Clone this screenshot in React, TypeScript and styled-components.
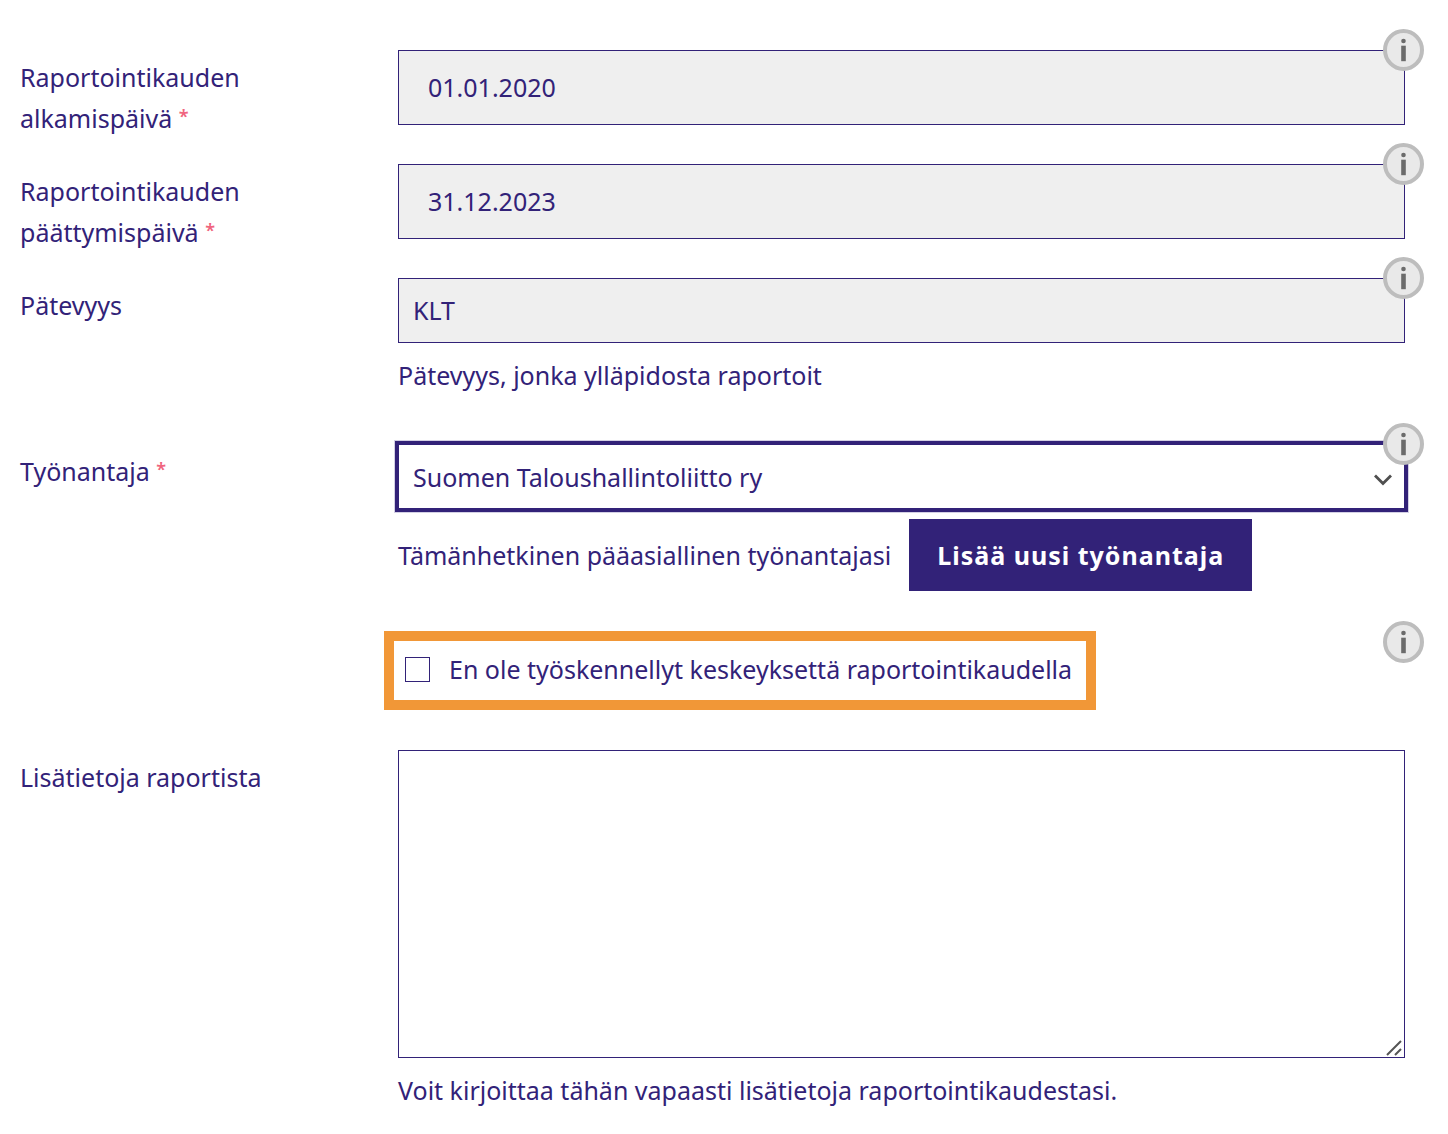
import React, { ReactNode } from 'react';
import styled, { createGlobalStyle } from 'styled-components';

const ink = '#322278';

const GlobalStyle = createGlobalStyle`
  *, *::before, *::after { box-sizing: border-box; }
  body {
    margin: 0;
    background: #fff;
    color: ${ink};
    font-family: "Noto Sans", "Open Sans", sans-serif;
    font-size: 25px;
    line-height: 41px;
  }
  input, select, textarea, button { font: inherit; color: inherit; border-radius: 0; }
`;

const Form = styled.form`
  display: grid;
  row-gap: 25px;
  padding: 50px 43px 10px 20px;
`;

const Row = styled.div`
  display: grid;
  grid-template-columns: 378px minmax(0, 1fr);
  align-items: start;
`;

const Label = styled.label`
  padding: 7px 24px 0 0;
`;

const Required = styled.span`
  color: #f0647e;
  font-size: 18px;
  font-weight: 600;
  line-height: 18px;
  vertical-align: 5px;
`;

const Field = styled.div<{ $loose?: boolean }>`
  grid-column: 2;
  position: relative;
  padding-bottom: ${(p) => (p.$loose ? 15 : 14)}px;
`;

const TextInput = styled.input<{ $roomy?: boolean }>`
  display: block;
  width: 100%;
  height: ${(p) => (p.$roomy ? 75 : 65)}px;
  padding: 0 ${(p) => (p.$roomy ? 29 : 14)}px 2px;
  border: 1px solid ${ink};
  background: #efefef;
  outline: none;
`;

const SelectWrap = styled.div`
  position: relative;
`;

const Select = styled.select`
  display: block;
  appearance: none;
  width: 100%;
  height: 65px;
  padding: 2px 48px 0 14px;
  border: 1px solid ${ink};
  background: #fff;
  outline: none;
  box-shadow: 0 0 0 3px ${ink}, 0 0 0 4px #d3d0e4;
`;

const Chevron = styled.svg`
  position: absolute;
  right: 12px;
  top: 29px;
  pointer-events: none;
`;

const Help = styled.p`
  margin: 0;
  padding: 12px 0 9px;
`;

const EmployerActions = styled.div`
  display: flex;
  align-items: center;
  gap: 18px;
  padding-top: 10px;
`;

const AddButton = styled.button`
  height: 72px;
  padding: 0 28px;
  border: 0;
  background: ${ink};
  color: #fff;
  font-weight: 700;
  letter-spacing: 1px;
  white-space: nowrap;
  cursor: pointer;
`;

const Highlight = styled.div`
  display: inline-flex;
  align-items: center;
  height: 79px;
  margin-left: -14px;
  padding: 0 14px 2px 11px;
  border: 10px solid #f19737;
  vertical-align: top;
`;

const CheckLabel = styled.label`
  display: flex;
  align-items: center;
  gap: 19px;
  white-space: nowrap;
`;

const Checkbox = styled.input`
  appearance: none;
  width: 25px;
  height: 25px;
  margin: 0;
  border: 1px solid ${ink};
  background: #fff;
  &:checked { background: ${ink}; box-shadow: inset 0 0 0 4px #fff; }
`;

const TextArea = styled.textarea`
  display: block;
  width: 100%;
  height: 308px;
  padding: 14px;
  border: 1px solid ${ink};
  background: #fff;
  resize: none;
  outline: none;
`;

const AreaWrap = styled.div`
  position: relative;
`;

const Grip = styled.svg`
  position: absolute;
  right: 3px;
  bottom: 2px;
  pointer-events: none;
`;

const InfoButton = styled.button<{ $low?: boolean }>`
  position: absolute;
  z-index: 1;
  top: ${(p) => (p.$low ? -10 : -21)}px;
  right: -19px;
  width: 41px;
  height: 42px;
  padding: 0;
  border: 0;
  border-radius: 50%;
  background: none;
  cursor: pointer;
  svg { display: block; }
`;

function Info({ low, about }: { low?: boolean; about: string }) {
  return (
    <InfoButton type="button" $low={low} aria-label={about}>
      <svg width="41" height="42" viewBox="0 0 41 42" aria-hidden="true">
        <ellipse cx="20.5" cy="21" rx="18.5" ry="19" fill="#e9e9e9" stroke="#bdbdbd" strokeWidth="4" />
        <circle cx="20.5" cy="12" r="2.3" fill="#6b6b6b" />
        <rect x="18.2" y="16.7" width="4.6" height="15.5" fill="#6b6b6b" />
      </svg>
    </InfoButton>
  );
}

function LabelText({ id, required, children }: { id: string; required?: boolean; children: ReactNode }) {
  return (
    <Label htmlFor={id}>
      {children}
      {required && <> <Required>*</Required></>}
    </Label>
  );
}

export default function App() {
  return (
    <>
      <GlobalStyle />
      <Form onSubmit={(e) => e.preventDefault()}>
        <Row>
          <LabelText id="start" required>Raportointikauden alkamispäivä</LabelText>
          <Field>
            <TextInput id="start" $roomy readOnly value="01.01.2020" />
            <Info about="Raportointikauden alkamispäivä" />
          </Field>
        </Row>
        <Row>
          <LabelText id="end" required>Raportointikauden päättymispäivä</LabelText>
          <Field>
            <TextInput id="end" $roomy readOnly value="31.12.2023" />
            <Info about="Raportointikauden päättymispäivä" />
          </Field>
        </Row>
        <Row>
          <LabelText id="qualification">Pätevyys</LabelText>
          <Field>
            <TextInput id="qualification" readOnly value="KLT" />
            <Help>Pätevyys, jonka ylläpidosta raportoit</Help>
            <Info about="Pätevyys" />
          </Field>
        </Row>
        <Row>
          <LabelText id="employer" required>Työnantaja</LabelText>
          <Field $loose>
            <SelectWrap>
              <Select id="employer" defaultValue="stl">
                <option value="stl">Suomen Taloushallintoliitto ry</option>
              </Select>
              <Chevron width="20" height="14" viewBox="0 0 20 14" fill="none" stroke="#4f4f4f" strokeWidth="2.8" aria-hidden="true">
                <path d="M2 2.5 10 10.5 18 2.5" />
              </Chevron>
            </SelectWrap>
            <EmployerActions>
              <span>Tämänhetkinen pääasiallinen työnantajasi</span>
              <AddButton type="button">Lisää uusi työnantaja</AddButton>
            </EmployerActions>
            <Info about="Työnantaja" />
          </Field>
        </Row>
        <Row>
          <Field $loose>
            <Highlight>
              <CheckLabel>
                <Checkbox type="checkbox" />
                En ole työskennellyt keskeyksettä raportointikaudella
              </CheckLabel>
            </Highlight>
            <Info low about="Työskentely raportointikaudella" />
          </Field>
        </Row>
        <Row>
          <LabelText id="details">Lisätietoja raportista</LabelText>
          <Field>
            <AreaWrap>
              <TextArea id="details" />
              <Grip width="16" height="16" viewBox="0 0 16 16" fill="none" stroke="#555" strokeWidth="2" aria-hidden="true">
                <path d="M1 15 15 1M9 15 15 9" />
              </Grip>
            </AreaWrap>
            <Help>Voit kirjoittaa tähän vapaasti lisätietoja raportointikaudestasi.</Help>
          </Field>
        </Row>
      </Form>
    </>
  );
}
